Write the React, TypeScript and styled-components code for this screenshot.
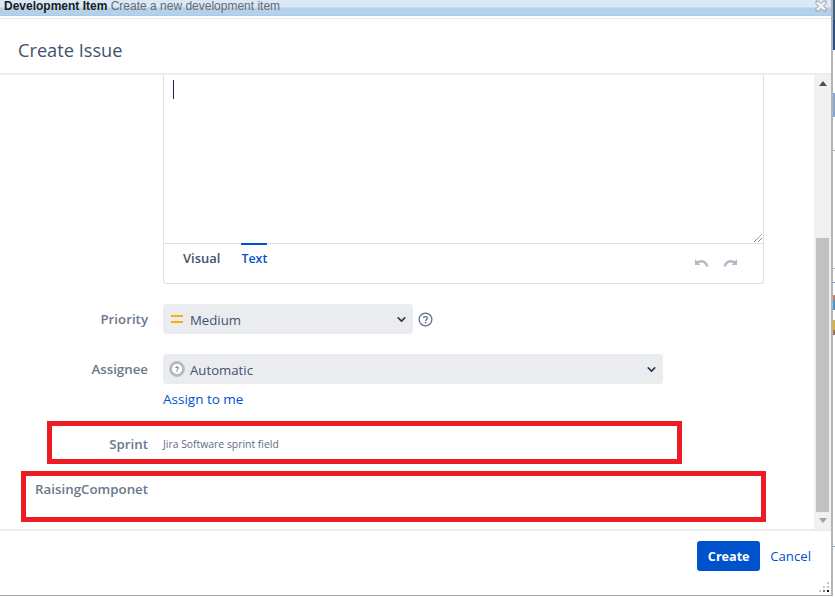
import React from "react";
import styled, { createGlobalStyle } from "styled-components";
import { ChevronDown } from "lucide-react";

const GlobalStyle = createGlobalStyle`
  html, body {
    margin: 0;
    padding: 0;
    width: 835px;
    height: 597px;
    overflow: hidden;
    background: #fff;
    font-family: "Open Sans", "Noto Sans", "Liberation Sans", sans-serif;
  }
  * {
    box-sizing: border-box;
  }
`;

const Page = styled.div`
  position: relative;
  display: flex;
  width: 835px;
  height: 597px;
  overflow: hidden;
`;

const Dialog = styled.div`
  display: flex;
  flex-direction: column;
  width: 833px;
  height: 596px;
  background: #fff;
  border-right: 2px solid #b4b4b4;
  border-bottom: 1px solid #a9a9a9;
`;

// what is left of the page behind the dialog
const Strip = styled.div`
  flex: 1;
  background: linear-gradient(
    #3f6486 0 20px,
    #2a4f85 20px 50px,
    #fff 50px 93px,
    #8aa9cf 93px 117px,
    #fff 117px 150px,
    #aaa 150px 151px,
    #fff 151px 268px,
    #aaa 268px 269px,
    #fff 269px 282px,
    #5b8ed0 282px 283px,
    #fff 283px 295px,
    #b98a7a 295px 300px,
    #5d93bd 300px 310px,
    #fff 310px 320px,
    #d4b23c 320px 330px,
    #a8764e 330px 335px,
    #fff 335px 546px,
    #7d9fc9 546px 547px,
    #fff 547px 597px
  );
`;

const TitleBar = styled.div`
  display: flex;
  align-items: flex-start;
  justify-content: space-between;
  height: 16px;
  padding: 0 4px 0 4px;
  overflow: hidden;
  background: linear-gradient(#d9e9f5 0 7px, #b3d1ea 8px 15px, #a9c4dc 16px);
  font-family: "Liberation Sans", Arial, sans-serif;
  font-size: 12px;
  line-height: 12px;
  color: #6b6b6b;
`;

const TitleText = styled.div`
  white-space: nowrap;
`;

const TitleStrong = styled.span`
  color: #1b1b1b;
  font-weight: 700;
  font-size: 12px;
`;

const CloseIcon = styled.svg`
  width: 12px;
  height: 12px;
`;

const Header = styled.div`
  display: flex;
  align-items: center;
  height: 57px;
  margin-top: 2px;
  padding: 8px 18px 0;
  border-top: 1px solid #e8e8e8;
  border-bottom: 2px solid #ebecf0;
`;

const Title = styled.h2`
  margin: 0;
  font-size: 18.2px;
  font-weight: 400;
  color: #42526e;
`;

const Body = styled.div`
  display: flex;
  flex: 1;
  min-height: 0;
`;

const Form = styled.div`
  flex: 1;
  display: flex;
  flex-direction: column;
  overflow: hidden;
`;

const EditorBox = styled.div`
  width: 601px;
  height: 209px;
  margin-left: 163px;
  border: 1px solid #dfe1e6;
  border-top: 0;
  border-radius: 0 0 3px 3px;
  flex-shrink: 0;
  display: flex;
  flex-direction: column;
`;

const EditArea = styled.div`
  position: relative;
  flex: 1;
  padding: 5px 9px;
  border-bottom: 1px solid #dfe1e6;
`;

const Caret = styled.div`
  width: 1px;
  height: 19px;
  background: #172b4d;
`;

const Resizer = styled.svg`
  position: absolute;
  right: 0;
  bottom: 0;
  width: 10px;
  height: 10px;
`;

const EditorBar = styled.div`
  display: flex;
  align-items: flex-start;
  height: 39px;
  padding: 0 25px 0 19px;
`;

const Tab = styled.div<{ $active?: boolean }>`
  position: relative;
  height: 28px;
  margin-right: 21px;
  margin-top: -1px;
  padding-top: ${props => (props.$active ? "5px" : "4px")};
  border-top: 2px solid ${props => (props.$active ? "#0052cc" : "transparent")};
  font-size: ${props => (props.$active ? "12.4px" : "13px")};
  font-weight: 600;
  line-height: 18px;
  color: ${props => (props.$active ? "#0052cc" : "#42526e")};
`;

const UndoGroup = styled.div`
  display: flex;
  gap: 14px;
  margin-left: auto;
  margin-top: 14px;
`;

const UndoIcon = styled.svg`
  width: 15px;
  height: 10px;
`;

const Row = styled.div<{ $top: number }>`
  display: flex;
  align-items: flex-start;
  margin-top: ${props => props.$top}px;
  flex-shrink: 0;
`;

const Label = styled.div`
  width: 148px;
  margin-right: 15px;
  text-align: right;
  font-size: 13.3px;
  font-weight: 600;
  line-height: 30px;
  color: #6b778c;
  white-space: nowrap;
`;

const Field = styled.div`
  display: flex;
  flex-direction: column;
`;

const SelectRow = styled.div`
  display: flex;
  align-items: center;
  gap: 5px;
`;

const Select = styled.div<{ $width: number }>`
  display: flex;
  align-items: center;
  justify-content: space-between;
  width: ${props => props.$width}px;
  height: 30px;
  padding: 0 5px 0 8px;
  border-radius: 3px;
  background: #ebecf0;
  color: #42526e;
  font-size: 13.2px;
`;

const SelectValue = styled.div`
  display: flex;
  align-items: center;
  gap: 5px;
`;

const SelectText = styled.span`
  padding-top: 2px;
`;

const HelpIcon = styled.svg`
  width: 15px;
  height: 15px;
`;

const PriorityIcon = styled.svg`
  width: 14px;
  height: 14px;
`;

const AutoIcon = styled.svg`
  width: 16px;
  height: 16px;
  margin-left: -2px;
`;

const AssignLink = styled.a`
  margin-top: 6px;
  font-size: 13.5px;
  line-height: 18px;
  color: #0052cc;
`;

const HintText = styled.div`
  font-size: 10.4px;
  line-height: 30px;
  color: #5e6c84;
`;

const Scrollbar = styled.div`
  display: flex;
  flex-direction: column;
  justify-content: space-between;
  flex-shrink: 0;
  width: 17px;
  background: #f1f1f1;
`;

const ScrollButton = styled.div`
  display: flex;
  align-items: center;
  justify-content: center;
  height: 17px;
`;

const ScrollThumb = styled.div`
  flex: 1;
  margin: 146px 2px 0 2px;
  background: #c1c1c1;
`;

const Arrow = styled.svg`
  width: 8px;
  height: 5px;
`;

const Footer = styled.div`
  position: relative;
  display: flex;
  align-items: center;
  justify-content: flex-end;
  gap: 10px;
  height: 66px;
  padding: 0 20px 14px 0;
  border-top: 2px solid #ebecf0;
`;

const CreateButton = styled.button`
  width: 63px;
  height: 30px;
  border: 0;
  border-radius: 3px;
  background: #0052cc;
  color: #fff;
  font-family: inherit;
  font-size: 12.6px;
  font-weight: 700;
`;

const CancelLink = styled.a`
  font-size: 13.2px;
  color: #0052cc;
`;

const Grip = styled.svg`
  position: absolute;
  right: 0;
  bottom: 1px;
  width: 12px;
  height: 12px;
`;

// red boxes drawn on top of the screenshot
const Mark = styled.div<{ $x: number; $y: number; $w: number; $h: number }>`
  position: absolute;
  left: ${props => props.$x}px;
  top: ${props => props.$y}px;
  width: ${props => props.$w}px;
  height: ${props => props.$h}px;
  border: 5px solid #ed1c24;
  pointer-events: none;
`;

const App: React.FC = () => (
  <Page>
    <GlobalStyle />
    <Dialog>
      <TitleBar>
        <TitleText>
          <TitleStrong>Development Item</TitleStrong> Create a new development item
        </TitleText>
        <CloseIcon viewBox="0 0 12 12">
          <path
            d="M1 1 L3.5 1 L6 3.5 L8.5 1 L11 1 L11 3.5 L8.5 6 L11 8.5 L11 11 L8.5 11 L6 8.5 L3.5 11 L1 11 L1 8.5 L3.5 6 L1 3.5 Z"
            fill="#eef4f8"
            stroke="#9a9a9a"
            strokeWidth="1"
          />
        </CloseIcon>
      </TitleBar>
      <Header>
        <Title>Create Issue</Title>
      </Header>
      <Body>
        <Form>
          <EditorBox>
            <EditArea>
              <Caret />
              <Resizer viewBox="0 0 10 10">
                <path d="M1 9 L9 1 M5 9 L9 5" stroke="#555" strokeWidth="1" strokeDasharray="1 0.6" />
              </Resizer>
            </EditArea>
            <EditorBar>
              <Tab>Visual</Tab>
              <Tab $active>Text</Tab>
              <UndoGroup>
                <UndoIcon viewBox="0 0 15 10">
                  <path d="M1 1 L1 7 L6.5 7 L4.6 5.2 C7.4 3.8 10.6 4.6 12.4 9 L14.6 8 C12.6 2.2 7.8 0.6 3.2 3.2 Z" fill="#b3bac5" />
                </UndoIcon>
                <UndoIcon viewBox="0 0 15 10">
                  <path d="M14 1 L14 7 L8.5 7 L10.4 5.2 C7.6 3.8 4.4 4.6 2.6 9 L0.4 8 C2.4 2.2 7.2 0.6 11.8 3.2 Z" fill="#b3bac5" />
                </UndoIcon>
              </UndoGroup>
            </EditorBar>
          </EditorBox>
          <Row $top={20}>
            <Label>Priority</Label>
            <Field>
              <SelectRow>
                <Select $width={250}>
                  <SelectValue>
                    <PriorityIcon viewBox="0 0 14 14">
                      <path d="M0 3 H12 V5 H0 Z M0 9 H12 V11 H0 Z" fill="#ffab00" />
                    </PriorityIcon>
                    <SelectText>Medium</SelectText>
                  </SelectValue>
                  <ChevronDown size={13} strokeWidth={3} color="#253858" />
                </Select>
                <HelpIcon viewBox="0 0 16 16">
                  <circle cx="8" cy="8" r="6.8" fill="none" stroke="#5e6c84" strokeWidth="1.3" />
                  <path d="M5.9 6.4 C6 4.4 10 4.4 10 6.6 C10 8 8 8 8 9.5" fill="none" stroke="#5e6c84" strokeWidth="1.3" />
                  <circle cx="8" cy="11.4" r="0.9" fill="#5e6c84" />
                </HelpIcon>
              </SelectRow>
            </Field>
          </Row>
          <Row $top={20}>
            <Label>Assignee</Label>
            <Field>
              <Select $width={500}>
                <SelectValue>
                  <AutoIcon viewBox="0 0 16 16">
                    <circle cx="8" cy="8" r="6.5" fill="#fff" stroke="#b3bac5" strokeWidth="2.8" />
                    <path d="M6.6 6.8 C6.7 5.6 9.4 5.6 9.4 7 C9.4 7.8 8 7.8 8 8.8" fill="none" stroke="#42526e" strokeWidth="1" />
                    <circle cx="8" cy="10.2" r="0.6" fill="#42526e" />
                  </AutoIcon>
                  <SelectText>Automatic</SelectText>
                </SelectValue>
                <ChevronDown size={13} strokeWidth={3} color="#253858" />
              </Select>
              <AssignLink>Assign to me</AssignLink>
            </Field>
          </Row>
          <Row $top={21}>
            <Label>Sprint</Label>
            <HintText>Jira Software sprint field</HintText>
          </Row>
          <Row $top={15}>
            <Label>RaisingComponet</Label>
          </Row>
        </Form>
        <Scrollbar>
          <ScrollButton>
            <Arrow viewBox="0 0 8 5">
              <path d="M4 0 L8 5 L0 5 Z" fill="#505050" />
            </Arrow>
          </ScrollButton>
          <ScrollThumb />
          <ScrollButton>
            <Arrow viewBox="0 0 8 5">
              <path d="M0 0 L8 0 L4 5 Z" fill="#a3a3a3" />
            </Arrow>
          </ScrollButton>
        </Scrollbar>
      </Body>
      <Footer>
        <CreateButton>Create</CreateButton>
        <CancelLink>Cancel</CancelLink>
        <Grip viewBox="0 0 12 12">
          <g fill="#c4c4c4">
            <rect x="8" y="0" width="2" height="2" />
            <rect x="4" y="4" width="2" height="2" />
            <rect x="8" y="4" width="2" height="2" />
            <rect x="0" y="8" width="2" height="2" />
          </g>
          <rect x="4" y="8" width="2" height="2" fill="#777" />
          <rect x="8" y="8" width="2" height="2" fill="#111" />
        </Grip>
      </Footer>
    </Dialog>
    <Strip />
    <Mark $x={47} $y={421} $w={635} $h={43} />
    <Mark $x={21} $y={471} $w={745} $h={51} />
  </Page>
);

export default App;
